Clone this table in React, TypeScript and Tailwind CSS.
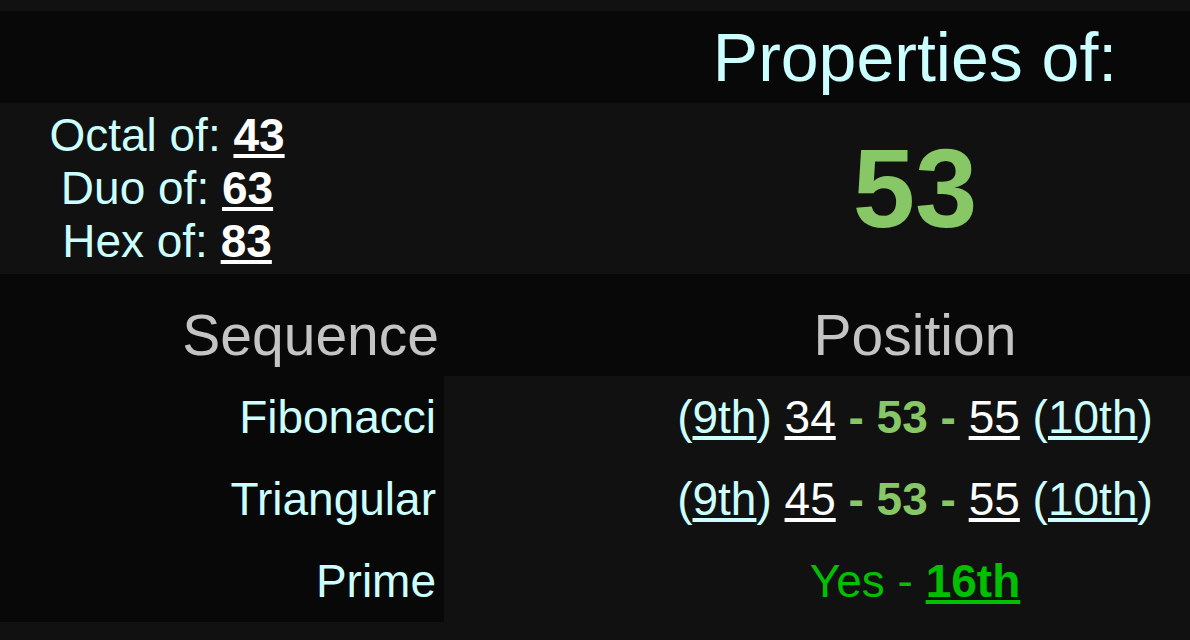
const cyan = 'text-[#ccffff]'

function Row({ label, children }: { label: string; children: React.ReactNode }) {
  return (
    <div className="flex h-[82px]">
      <div className={`w-[444px] bg-[#080808] flex items-center justify-end pr-[8px] ${cyan}`}>{label}</div>
      <div className="flex-1 bg-[#111111] flex items-center justify-center pl-[196px] whitespace-pre">{children}</div>
    </div>
  )
}

function Seq({ a, b }: { a: string; b: string }) {
  return (
    <>
      <span className={cyan}>(<u>9th</u>) </span>
      <u className="text-white">{a}</u>
      <b className="text-[#88c766]"> - 53 - </b>
      <u className="text-white">{b}</u>
      <span className={cyan}> (<u>10th</u>)</span>
    </>
  )
}

export default function App() {
  return (
    <div className="min-h-screen bg-[#111111] pt-[11px] font-['Liberation_Sans',Arial,sans-serif] leading-normal">
      <div className="flex h-[92px] bg-[#080808]">
        <div className="w-[640px]" />
        <div className={`flex-1 flex items-center justify-center text-[68px] ${cyan}`}>Properties of:</div>
      </div>

      <div className="flex h-[171px]">
        <div className="w-[334px] flex flex-col items-center justify-center text-[46px] leading-[53px]">
          <div className={cyan}>Octal of: <b className="text-white underline">43</b></div>
          <div className={cyan}>Duo of: <b className="text-white underline">63</b></div>
          <div className={cyan}>Hex of: <b className="text-white underline">83</b></div>
        </div>
        <div className="w-[306px]" />
        <div className="flex-1 flex items-center justify-center text-[112px] font-bold text-[#88c766]">53</div>
      </div>

      <div className="flex h-[102px] bg-[#080808] text-[57px] text-[#c4c4c4]">
        <div className="w-[444px] text-right pr-[5px] pt-[19px]">Sequence</div>
        <div className="flex-1 text-center pl-[196px] pt-[19px]">Position</div>
      </div>

      <div className="text-[46px]">
        <Row label="Fibonacci"><Seq a="34" b="55" /></Row>
        <Row label="Triangular"><Seq a="45" b="55" /></Row>
        <Row label="Prime">
          <span className="text-[#00c000]">Yes - <b><u>16th</u></b></span>
        </Row>
      </div>
    </div>
  )
}
